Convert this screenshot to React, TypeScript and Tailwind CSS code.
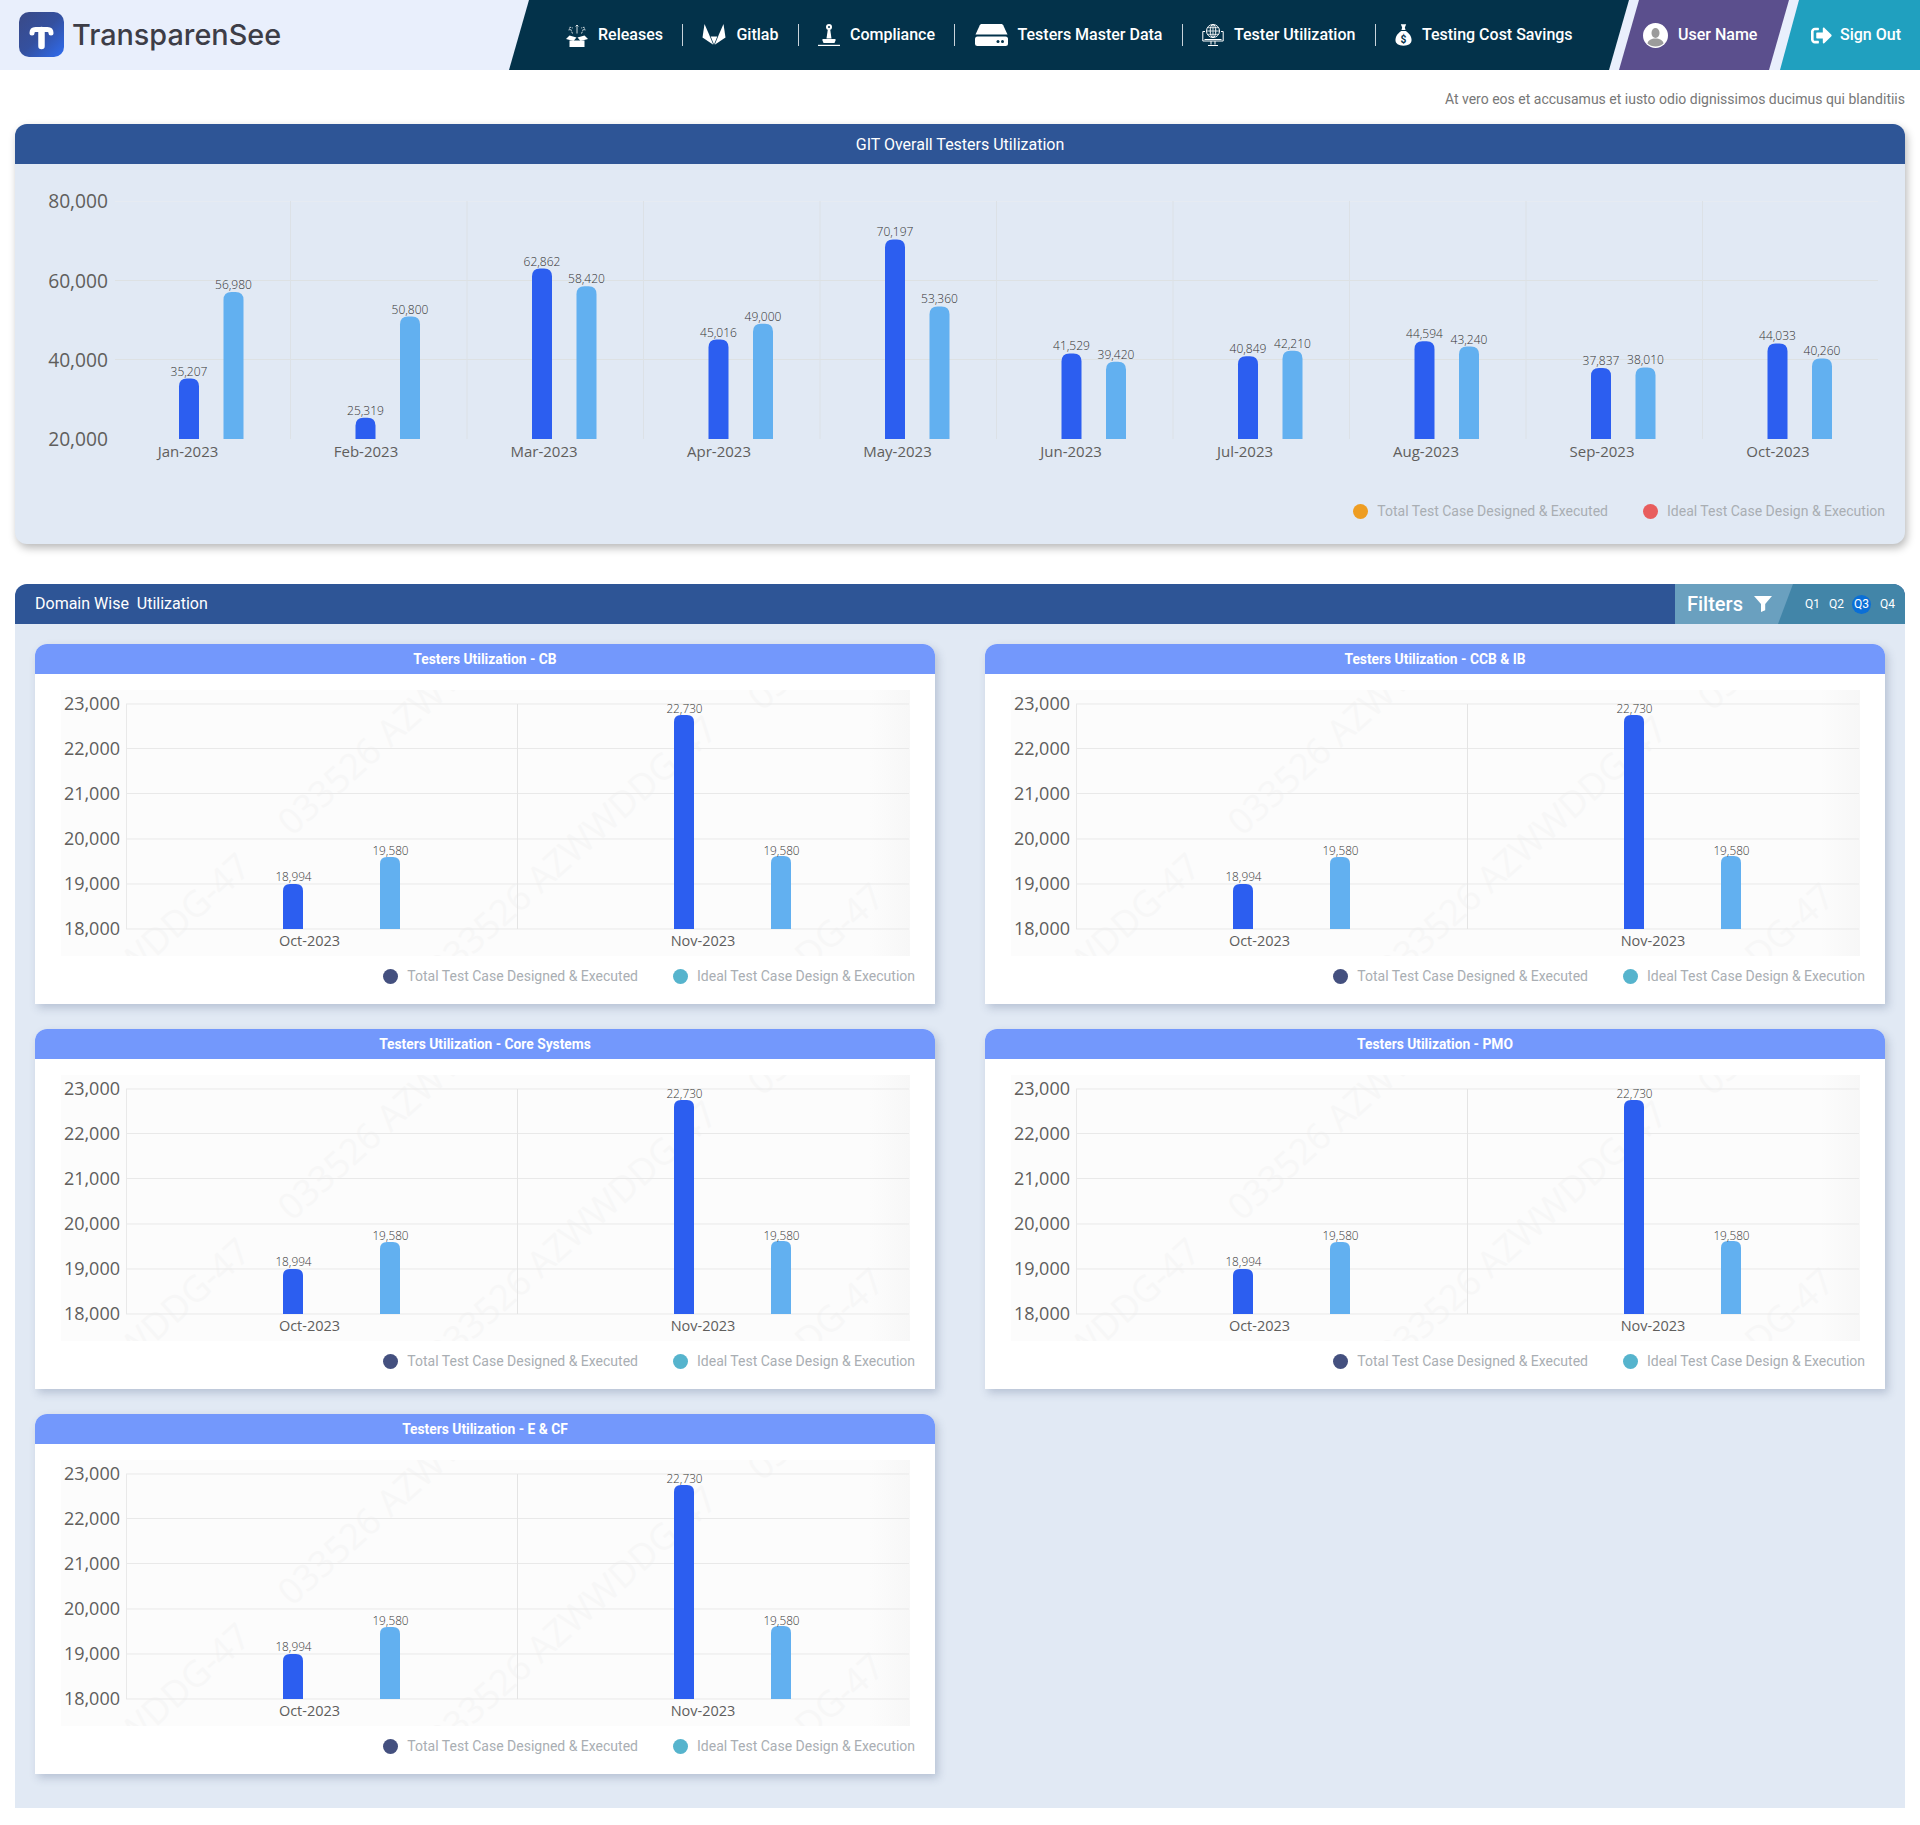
import { FaSignOutAlt } from "react-icons/fa";

const MONTHS = [
  { label: "Jan-2023", total: 35207, ideal: 56980, lx: 188 },
  { label: "Feb-2023", total: 25319, ideal: 50800, lx: 366 },
  { label: "Mar-2023", total: 62862, ideal: 58420, lx: 544 },
  { label: "Apr-2023", total: 45016, ideal: 49000, lx: 719 },
  { label: "May-2023", total: 70197, ideal: 53360, lx: 897.5 },
  { label: "Jun-2023", total: 41529, ideal: 39420, lx: 1071 },
  { label: "Jul-2023", total: 40849, ideal: 42210, lx: 1245 },
  { label: "Aug-2023", total: 44594, ideal: 43240, lx: 1426 },
  { label: "Sep-2023", total: 37837, ideal: 38010, lx: 1602 },
  { label: "Oct-2023", total: 44033, ideal: 40260, lx: 1778 },
];

const DOMAINS = ["CB", "CCB & IB", "Core Systems", "PMO", "E & CF"];

const fmt = (n: number) => n.toLocaleString("en-US");

function barPath(x: number, top: number, bottom: number, w: number, r: number) {
  return `M${x} ${bottom}V${top + r}Q${x} ${top} ${x + r} ${top}H${x + w - r}Q${x + w} ${top} ${x + w} ${top + r}V${bottom}Z`;
}

function ReleasesIcon() {
  return (
    <svg width="22" height="23" viewBox="0 0 22 23" fill="none" className="shrink-0">
      <g stroke="#fff" strokeWidth="0.8">
        <path d="M11 9.500V1M9.600 2.400 11 1l1.400 1.400" />
        <path d="M6.500 9.500 4.500 5 M3 6.400 3.800 3.200l3 .8" strokeDasharray="2 0.8" />
        <path d="M15.500 9.500 17.500 5M19 6.400 18.200 3.200l-3 .8" strokeDasharray="2 0.8" />
      </g>
      <path d="M3.500 16.500h15V23h-15z" fill="#fff" />
      <path d="M3.500 11.500l7 2-3 3.500-7.500-2z" fill="#fff" />
      <path d="M18.500 11.500l-7 2 3 3.500 7.500-2z" fill="#fff" />
    </svg>
  );
}

function GitlabIcon() {
  return (
    <svg width="24" height="22" viewBox="0 0 24 22" fill="#fff" className="shrink-0">
      <path d="M2.500 0 7.500 11.500 11.300 20.800 0.500 13.500z" />
      <path d="M21.500 0 16.500 11.500 12.700 20.800 23.500 13.500z" />
      <path d="M8.700 12.500h6.600L12 20.500z" />
    </svg>
  );
}

function StampIcon() {
  return (
    <svg width="22" height="22" viewBox="0 0 22 22" fill="#fff" className="shrink-0">
      <circle cx="11" cy="3" r="3" />
      <circle cx="11" cy="3" r="1" fill="#03324a" />
      <path d="M9.800 5.500h2.400l1.300 9h-5z" />
      <path d="M4.500 15h13v1.500l-1 2.500h-11l-1-2.500z" />
      <path d="M0 20.800h22V22H0z" />
    </svg>
  );
}

function ServerIcon() {
  return (
    <svg width="33" height="22" viewBox="0 0 33 22" className="shrink-0">
      <path d="M7 0h19c1 0 1.700.4 2.200 1.300L32.500 10.500H.5L4.800 1.300C5.300.4 6 0 7 0z" fill="#fff" />
      <rect x="0" y="12.500" width="33" height="9.500" rx="2.500" fill="#fff" />
      <circle cx="23" cy="17.500" r="1.500" fill="#03324a" />
      <circle cx="27.500" cy="17.500" r="1.500" fill="#03324a" />
    </svg>
  );
}

function GlobeIcon() {
  return (
    <svg width="22" height="22" viewBox="0 0 22 22" fill="none" stroke="#fff" strokeWidth="1" className="shrink-0">
      <circle cx="11" cy="7" r="6.500" />
      <ellipse cx="11" cy="7" rx="2.800" ry="6.500" />
      <path d="M11 .5v13M4.500 7h13M5.500 3.700h11M5.500 10.300h11" strokeWidth="0.8" />
      <path d="M3 7.500H.8V17h20.400V7.500H19" />
      <path d="M2.500 15.500h17" />
      <path d="M9 17v3.500M13 17v3.500M6 21.500h10" />
    </svg>
  );
}

function MoneyIcon() {
  return (
    <svg width="17" height="24" viewBox="0 0 19 25" className="shrink-0">
      <path d="M6.500 0.500h6l-1.500 3.500 .8 3h-4.600l.8-3z" fill="#fff" />
      <path d="M7 8h5c3.500 2 6.500 6 6.500 10.200 0 4-3.500 6.300-9 6.300s-9-2.300-9-6.300C.5 14 3.500 10 7 8z" fill="#fff" />
      <text x="9.500" y="21" textAnchor="middle" fontSize="11.500" fontWeight="700" fill="#03324a" fontFamily="Roboto, sans-serif">$</text>
    </svg>
  );
}

function AvatarIcon() {
  return (
    <svg width="25" height="25" viewBox="0 0 25 25" className="shrink-0">
      <circle cx="12.500" cy="12.500" r="12.500" fill="#fff" />
      <ellipse cx="12.500" cy="10" rx="4" ry="5" fill="#9b9b9b" />
      <path d="M4.500 20.500c.5-3.500 4-5 8-5s7.500 1.500 8 5c-2 2-5 3-8 3s-6-1-8-3z" fill="#9b9b9b" />
    </svg>
  );
}

function FunnelIcon() {
  return (
    <svg width="18" height="16" viewBox="0 0 18 16" fill="#fff" className="shrink-0">
      <path d="M0 0h18l-6.800 8v6.200L7 16V8z" />
    </svg>
  );
}

function LogoMark() {
  return (
    <svg width="45" height="45" viewBox="0 0 45 45" className="shrink-0">
      <defs>
        <linearGradient id="logo-bg" x1="0" y1="0" x2="1" y2="1">
          <stop offset="0" stopColor="#3a4a87" />
          <stop offset="0.5" stopColor="#34509f" />
          <stop offset="1" stopColor="#2f6cf0" />
        </linearGradient>
      </defs>
      <rect width="45" height="45" rx="10" fill="url(#logo-bg)" />
      <path d="M13 21c0-2.500 1.500-3.500 3.500-3.500h12c2 0 3.500 1 3.500 3.500" fill="none" stroke="#fff" strokeWidth="5" strokeLinecap="round" />
      <path d="M22.500 18v16" fill="none" stroke="#fff" strokeWidth="6.500" strokeLinecap="round" />
    </svg>
  );
}

function NavItem({ icon, label, last }: { icon: React.ReactNode; label: string; last?: boolean }) {
  return (
    <>
      <div className="flex items-center gap-[10px]">
        {icon}
        <span className="text-[16px] font-medium text-white whitespace-nowrap">{label}</span>
      </div>
      {!last && <div className="mx-[19.25px] h-[22px] w-px bg-[#c9d3da]" />}
    </>
  );
}

function Header() {
  return (
    <header className="flex h-[70px] bg-[#e9effc]">
      <div className="flex w-[529px] shrink-0 items-center gap-[8px] pl-[19px] pb-[1px]">
        <LogoMark />
        <span className="font-['Inter',sans-serif] text-[28.8px] font-medium text-[#3d3d47]">TransparenSee</span>
      </div>
      <nav className="ml-[-20px] flex w-[1120px] shrink-0 items-center bg-[#03324a] pl-[57px] [clip-path:polygon(20px_0,100%_0,calc(100%-20px)_100%,0_100%)]">
        <NavItem icon={<ReleasesIcon />} label="Releases" />
        <NavItem icon={<GitlabIcon />} label="Gitlab" />
        <NavItem icon={<StampIcon />} label="Compliance" />
        <NavItem icon={<ServerIcon />} label="Testers Master Data" />
        <NavItem icon={<GlobeIcon />} label="Tester Utilization" />
        <NavItem icon={<MoneyIcon />} label="Testing Cost Savings" last />
      </nav>
      <div className="ml-[-10px] flex w-[170px] shrink-0 items-center gap-[10px] bg-[#5b4f8d] pl-[24px] [clip-path:polygon(20px_0,100%_0,calc(100%-20px)_100%,0_100%)]">
        <AvatarIcon />
        <span className="text-[16px] font-medium text-white whitespace-nowrap">User Name</span>
      </div>
      <div className="ml-[-9px] flex flex-1 items-center gap-[8px] bg-[#20a0bf] pl-[31px] [clip-path:polygon(19px_0,100%_0,100%_100%,0_100%)]">
        <FaSignOutAlt size={21} color="#fff" />
        <span className="text-[16px] font-medium text-white whitespace-nowrap">Sign Out</span>
      </div>
    </header>
  );
}

function OverallChart() {
  const base = 439;
  const y = (v: number) => base - ((v - 20000) / 20000) * 79.5;
  const labelY = [207.5, 288, 367, 446];
  return (
    <svg viewBox="15 164 1890 310" className="block h-[310px] w-[1890px] font-['Open_Sans',sans-serif]">
      <line x1="115" x2="1878" y1="201.500" y2="201.500" stroke="#e6ebf2" />
      <line x1="115" x2="1878" y1="280.500" y2="280.500" stroke="#dde1e3" />
      <line x1="115" x2="1878" y1="359.500" y2="359.500" stroke="#dde1e3" />
      {Array.from({ length: 9 }).map((_, i) => (
        <line key={i} x1={290.5 + i * 176.5} x2={290.5 + i * 176.5} y1="201" y2="439" stroke="#dce1e6" />
      ))}
      {["80,000", "60,000", "40,000", "20,000"].map((t, i) => (
        <text key={t} x="108" y={labelY[i]} textAnchor="end" fontSize="19.200" fill="#605e5c">{t}</text>
      ))}
      {MONTHS.map((m, i) => {
        const x = 179 + i * 176.5;
        return (
          <g key={m.label}>
            <path d={barPath(x, y(m.total), base, 20, 8)} fill="#2c5ef0" />
            <path d={barPath(x + 44.5, y(m.ideal), base, 20, 8)} fill="#62b0f0" />
            <text x={x + 10} y={y(m.total) - 3} textAnchor="middle" fontSize="12" fontWeight="300" fill="#333">{fmt(m.total)}</text>
            <text x={x + 54.5} y={y(m.ideal) - 3} textAnchor="middle" fontSize="12" fontWeight="300" fill="#333">{fmt(m.ideal)}</text>
            <text x={m.lx} y="457" textAnchor="middle" fontSize="15" fill="#605e5c">{m.label}</text>
          </g>
        );
      })}
    </svg>
  );
}

function MiniChart() {
  const ys = [704, 748.5, 793.5, 839, 884, 929];
  const labels = ["23,000", "22,000", "21,000", "20,000", "19,000", "18,000"];
  const bars = [
    { x: 283, top: 884, value: "18,994", color: "#2c5ef0", ly: 881 },
    { x: 380, top: 857, value: "19,580", color: "#62b0f0", ly: 855 },
    { x: 674, top: 715, value: "22,730", color: "#2c5ef0", ly: 713 },
    { x: 771, top: 856, value: "19,580", color: "#62b0f0", ly: 855 },
  ];
  return (
    <svg viewBox="61 690 849 266" className="block h-[266px] w-[849px] bg-[#fcfcfc] font-['Open_Sans',sans-serif]">
      <defs>
        <linearGradient id="fade" x1="0" x2="1" y1="0" y2="0">
          <stop offset="0" stopColor="#fcfcfc" />
          <stop offset="1" stopColor="#f7f7f7" />
        </linearGradient>
      </defs>
      <rect x="870" y="690" width="40" height="266" fill="url(#fade)" />
      <g fill="#f7f7f7" fontSize="36" fontFamily="Open Sans, sans-serif">
        <text x="292" y="837" transform="rotate(-42 292 837)">033526 AZWWDDG-47</text>
        <text x="253" y="870" textAnchor="end" transform="rotate(-42 253 870)">033526 AZWWDDG-47</text>
        <text x="720" y="733" textAnchor="end" transform="rotate(-42 720 733)">033526 AZWWDDG-47</text>
        <text x="887" y="900" textAnchor="end" transform="rotate(-42 887 900)">033526 AZWWDDG-47</text>
        <text x="762" y="712" transform="rotate(-42 762 712)">033526</text>
      </g>
      {ys.map((g) => (
        <line key={g} x1="126" x2="909" y1={g} y2={g} stroke="#e9e9e9" />
      ))}
      <line x1="126.500" x2="126.500" y1="704" y2="929" stroke="#e9e9e9" />
      <line x1="517.500" x2="517.500" y1="704" y2="929" stroke="#e4e4e4" />
      {labels.map((t, i) => (
        <text key={t} x="120" y={ys[i] + 6} textAnchor="end" fontSize="18" fill="#605e5c">{t}</text>
      ))}
      {bars.map((b) => (
        <g key={b.x}>
          <path d={barPath(b.x, b.top, 929, 20, 7)} fill={b.color} />
          <text x={b.x + 10.5} y={b.ly} textAnchor="middle" fontSize="11.800" fontWeight="300" fill="#3a3a3a">{b.value}</text>
        </g>
      ))}
      <text x="309.500" y="946" textAnchor="middle" fontSize="14.500" fill="#605e5c">Oct-2023</text>
      <text x="703" y="946" textAnchor="middle" fontSize="14.500" fill="#605e5c">Nov-2023</text>
    </svg>
  );
}

function Legend({ first, second, className }: { first: string; second: string; className: string }) {
  return (
    <div className={`flex items-center justify-end text-[14px] text-[#a9aeb3] ${className}`}>
      <span className={`h-[15px] w-[15px] rounded-full ${first}`} />
      <span className="ml-[9px]">Total Test Case Designed &amp; Executed</span>
      <span className={`ml-[35px] h-[15px] w-[15px] rounded-full ${second}`} />
      <span className="ml-[9px]">Ideal Test Case Design &amp; Execution</span>
    </div>
  );
}

function DomainCard({ name }: { name: string }) {
  return (
    <div className="h-[360px] overflow-hidden rounded-t-[12px] bg-white shadow-[3px_4px_8px_rgba(60,80,120,0.25)]">
      <div className="flex h-[30px] items-center justify-center bg-[#7398fc] text-[13.8px] font-bold text-white">
        Testers Utilization - {name}
      </div>
      <div className="pl-[26px] pt-[16px]">
        <MiniChart />
      </div>
      <Legend first="bg-[#44507f]" second="bg-[#56b4cd]" className="mt-[10px] h-[20px] pr-[20px]" />
    </div>
  );
}

export default function App() {
  return (
    <div className="min-h-[1825px] bg-white font-['Roboto',sans-serif]">
      <Header />
      <p className="flex h-[54px] items-start justify-end pr-[15px] pt-[19px] text-[14px] leading-[20px] text-[#777]">
        At vero eos et accusamus et iusto odio dignissimos ducimus qui blanditiis
      </p>

      <section className="mx-[15px] h-[420px] rounded-[12px] bg-[#e1e9f4] shadow-[2px_4px_8px_rgba(0,0,0,0.28)]">
        <div className="flex h-[40px] items-center justify-center rounded-t-[12px] bg-[#2e5596] pt-[1px] text-[16px] text-white">
          GIT Overall Testers Utilization
        </div>
        <OverallChart />
        <Legend first="bg-[#ee9d22]" second="bg-[#e85d5d]" className="mt-[27px] h-[20px] pr-[20px]" />
      </section>

      <section className="mx-[15px] mt-[40px] h-[1224px] rounded-t-[12px] bg-[#e1e9f4]">
        <div className="flex h-[40px] items-center justify-between overflow-hidden rounded-t-[12px] bg-[#2e5596] pl-[20px] text-white">
          <span className="text-[16px] whitespace-pre">Domain Wise  Utilization</span>
          <div className="flex h-full w-[230px] bg-[#4285a8]">
            <div className="flex w-[118px] items-center gap-[11px] bg-[#6aa0bf] pl-[12px] [clip-path:polygon(0_0,100%_0,calc(100%-15px)_100%,0_100%)]">
              <span className="text-[20px] font-medium">Filters</span>
              <FunnelIcon />
            </div>
            <div className="flex items-center pl-[12px] text-[12px]">
              <span>Q1</span>
              <span className="ml-[9px]">Q2</span>
              <span className="ml-[8px] flex h-[19px] w-[19px] items-center justify-center rounded-full bg-[#0b6fd6]">Q3</span>
              <span className="ml-[9px]">Q4</span>
            </div>
          </div>
        </div>
        <div className="grid grid-cols-[900px_900px] gap-x-[50px] gap-y-[25px] px-[20px] pt-[20px]">
          {DOMAINS.map((d) => (
            <DomainCard key={d} name={d} />
          ))}
        </div>
      </section>
    </div>
  );
}
